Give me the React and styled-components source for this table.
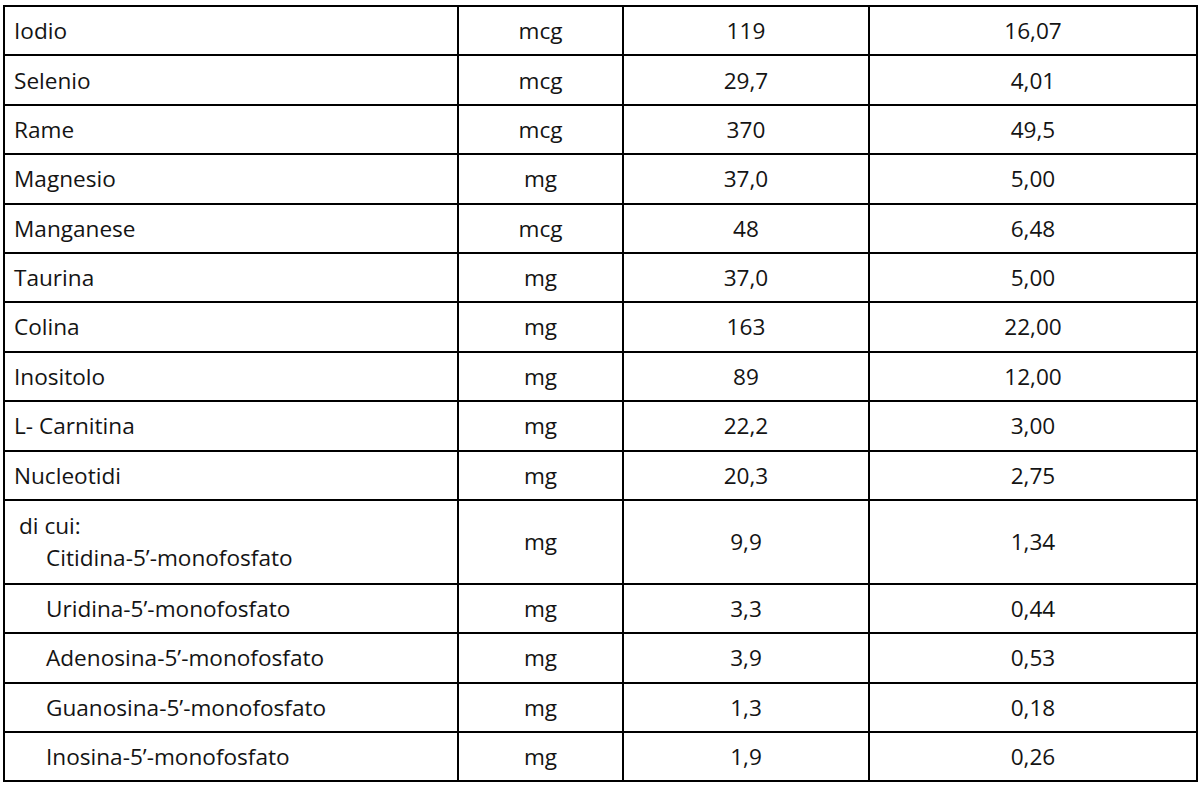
import React from "react";
import styled, { createGlobalStyle } from "styled-components";

const Global = createGlobalStyle`
  html, body { margin: 0; padding: 0; background: #ffffff; }
  body { font-family: "Open Sans", "Liberation Sans", sans-serif; }
`;

const Page = styled.div`
  padding: 5px 0 0 3px;
  width: 1200px;
  height: 801px;
  box-sizing: border-box;
`;

const Table = styled.table`
  border-collapse: collapse;
  table-layout: fixed;
  width: 1193px;
  border: 2px solid #000;
  color: #141414;
  font-size: 22.6px;
`;

const Row = styled.tr`
  height: ${(p) => (p.$tall ? "84px" : "49.4px")};
`;

const Cell = styled.td`
  border: 2px solid #000;
  padding: 0 0 0 ${(p) => (p.$left ? (p.$indent ? "41px" : "9px") : "0")};
  text-align: ${(p) => (p.$left ? "left" : "center")};
  vertical-align: middle;
  white-space: nowrap;
  line-height: 1.2;
`;

const Sub = styled.div`
  line-height: 32px;
  padding-left: ${(p) => (p.$indent ? "32px" : "5px")};
`;

const rows = [
  ["Iodio", "mcg", "119", "16,07"],
  ["Selenio", "mcg", "29,7", "4,01"],
  ["Rame", "mcg", "370", "49,5"],
  ["Magnesio", "mg", "37,0", "5,00"],
  ["Manganese", "mcg", "48", "6,48"],
  ["Taurina", "mg", "37,0", "5,00"],
  ["Colina", "mg", "163", "22,00"],
  ["Inositolo", "mg", "89", "12,00"],
  ["L- Carnitina", "mg", "22,2", "3,00"],
  ["Nucleotidi", "mg", "20,3", "2,75"],
];

const subRows = [
  ["Uridina-5\u2019-monofosfato", "mg", "3,3", "0,44"],
  ["Adenosina-5\u2019-monofosfato", "mg", "3,9", "0,53"],
  ["Guanosina-5\u2019-monofosfato", "mg", "1,3", "0,18"],
  ["Inosina-5\u2019-monofosfato", "mg", "1,9", "0,26"],
];

const citidina = "Citidina-5\u2019-monofosfato";

export default function App() {
  return (
    <>
      <Global />
      <Page>
        <Table>
          <colgroup>
            <col style={{ width: "454px" }} />
            <col style={{ width: "165px" }} />
            <col style={{ width: "246px" }} />
            <col style={{ width: "328px" }} />
          </colgroup>
          <tbody>
            {rows.map((r) => (
              <Row key={r[0]}>
                <Cell $left>{r[0]}</Cell>
                <Cell>{r[1]}</Cell>
                <Cell>{r[2]}</Cell>
                <Cell>{r[3]}</Cell>
              </Row>
            ))}
            <Row $tall>
              <Cell $left>
                <Sub>di cui:</Sub>
                <Sub $indent>{citidina}</Sub>
              </Cell>
              <Cell>mg</Cell>
              <Cell>9,9</Cell>
              <Cell>1,34</Cell>
            </Row>
            {subRows.map((r) => (
              <Row key={r[0]}>
                <Cell $left $indent>{r[0]}</Cell>
                <Cell>{r[1]}</Cell>
                <Cell>{r[2]}</Cell>
                <Cell>{r[3]}</Cell>
              </Row>
            ))}
          </tbody>
        </Table>
      </Page>
    </>
  );
}
